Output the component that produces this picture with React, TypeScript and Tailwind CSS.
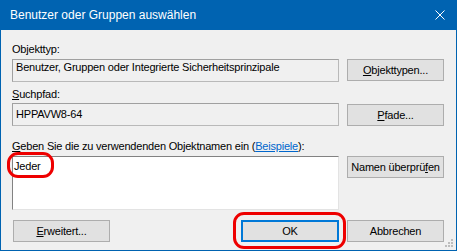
import React from "react";

const ui = "font-['Liberation_Sans',Arial,sans-serif] text-[11px] leading-[13px] tracking-[-0.2px] text-black";

function Mn({ children }: { children: React.ReactNode }) {
  return <span className="underline underline-offset-[1px]">{children}</span>;
}

function Btn({ children, focused, className }: { children: React.ReactNode; focused?: boolean; className?: string }) {
  return (
    <div
      className={
        "flex h-[22px] items-center justify-center bg-[#e1e1e1] " +
        (focused ? "border-2 border-[#0078d7] " : "border border-[#adadad] ") +
        (className ?? "")
      }
    >
      {children}
    </div>
  );
}

function ReadOnlyBox({ children, className }: { children: React.ReactNode; className?: string }) {
  return (
    <div
      className={
        "h-[23px] border border-t-[#a0a0a0] border-l-[#a0a0a0] border-b-[#b9b9b9] border-r-[#b9b9b9] bg-[#f0f0f0] px-[3px] " +
        (className ?? "")
      }
    >
      {children}
    </div>
  );
}

function RedRing({ className }: { className: string }) {
  return <div className={"pointer-events-none absolute rounded-[11px] border-[3px] border-[#ee0000] " + className} />;
}

export default function App() {
  return (
    <div className={"flex h-[251px] w-[457px] flex-col bg-[#0063b1] " + ui}>
      {/* title bar */}
      <div className="flex h-[30px] shrink-0 items-center justify-between pl-[10px] pr-[11px]">
        <span className="text-[12px] tracking-normal text-white">Benutzer oder Gruppen auswählen</span>
        <svg width="10" height="10" viewBox="0 0 10 10" className="mr-[1px]">
          <path d="M0.5 0.5 L9.5 9.5 M9.5 0.5 L0.5 9.5" stroke="#fff" strokeWidth="1" />
        </svg>
      </div>

      {/* client */}
      <div className="relative mx-px mb-px flex-1 bg-[#f0f0f0] pl-[11px] pr-[12px] pt-[13px]">
        <div>Objekttyp:</div>
        <div className="mt-[3px] grid grid-cols-[327px_97px] gap-x-2">
          <ReadOnlyBox className="pt-[1px]">Benutzer, Gruppen oder Integrierte Sicherheitsprinzipale</ReadOnlyBox>
          <Btn>
            <Mn>O</Mn>bjekttypen...
          </Btn>
        </div>

        <div className="mt-[6px]">
          <Mn>S</Mn>uchpfad:
        </div>
        <div className="mt-[2px] grid grid-cols-[327px_97px] gap-x-2">
          <ReadOnlyBox className="flex items-center">HPPAVW8-64</ReadOnlyBox>
          <div className="pt-[1px]">
            <Btn>
              <Mn>P</Mn>fade...
            </Btn>
          </div>
        </div>

        <div className="mt-[14px]">
          <Mn>G</Mn>eben Sie die zu verwendenden Objektnamen ein (
          <span className="text-[#0066cc] underline underline-offset-[1px]">Beispiele</span>):
        </div>
        <div className="mt-[3px] grid grid-cols-[327px_97px] gap-x-2">
          <div className="h-[54px] border border-t-[#828282] border-l-[#828282] border-b-[#e3e3e3] border-r-[#e3e3e3] bg-white px-[1px] pt-[3px]">
            Jeder
          </div>
          <div>
            <Btn>
              Namen überprü<Mn>f</Mn>en
            </Btn>
          </div>
        </div>

        <div className="mt-[10px] flex items-center">
          <Btn className="ml-px w-[97px]">
            <Mn>E</Mn>rweitert...
          </Btn>
          <div className="flex-1" />
          <Btn focused className="w-[98px]">
            OK
          </Btn>
          <Btn className="ml-2 w-[97px]">Abbrechen</Btn>
        </div>

        {/* resize grip */}
        <svg width="11" height="11" viewBox="0 0 11 11" className="absolute bottom-[2px] right-[2px]">
          <g fill="#bdbdbd">
            <rect x="8" y="2" width="2" height="2" />
            <rect x="5" y="5" width="2" height="2" />
            <rect x="8" y="5" width="2" height="2" />
            <rect x="2" y="8" width="2" height="2" />
            <rect x="5" y="8" width="2" height="2" />
            <rect x="8" y="8" width="2" height="2" />
          </g>
        </svg>

        {/* annotations */}
        <RedRing className="left-[6px] top-[122px] h-[26px] w-[47px]" />
        <RedRing className="left-[232px] top-[182px] h-[37px] w-[113px]" />
      </div>
    </div>
  );
}
